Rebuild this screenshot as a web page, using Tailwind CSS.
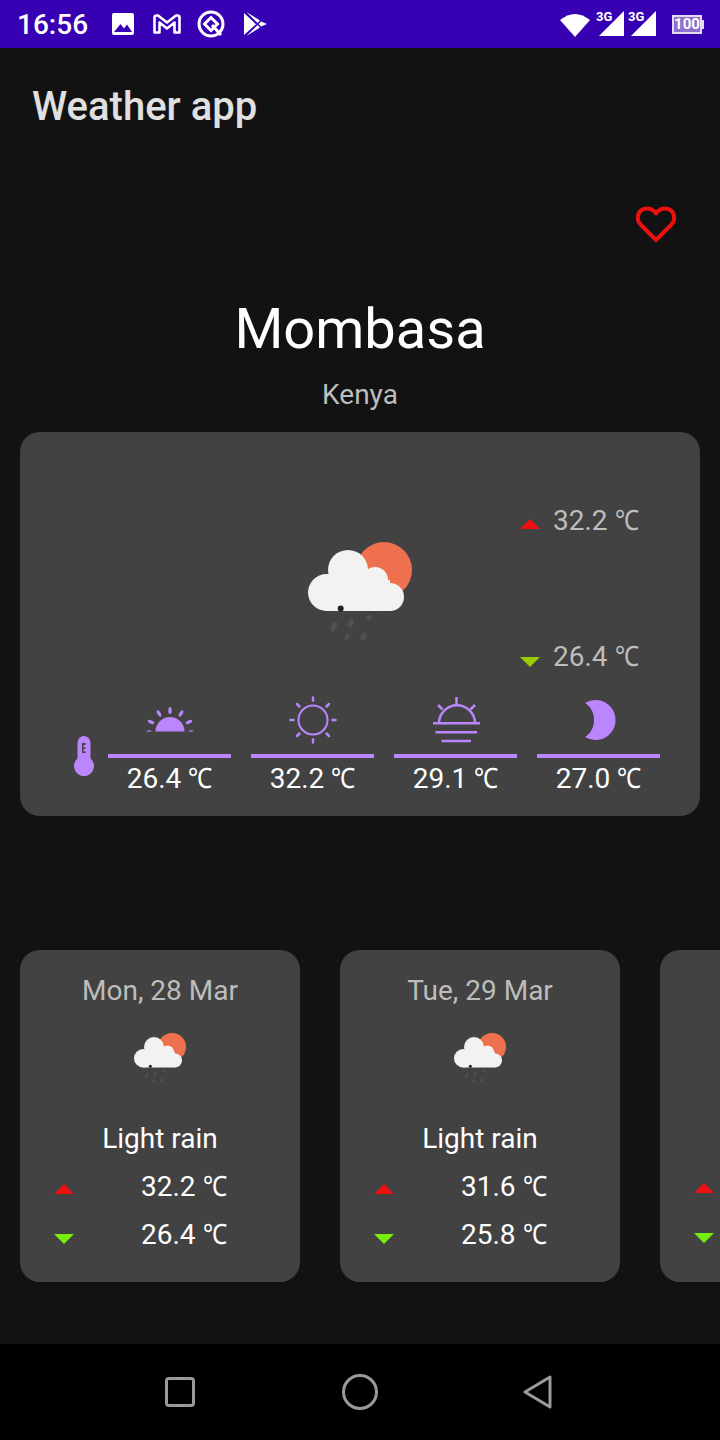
<!DOCTYPE html>
<html lang="en">
<head>
  <meta charset="UTF-8" />
  <meta name="viewport" content="width=device-width, initial-scale=1.0"/>
  <title>Weather app</title>
  <script src="https://cdn.jsdelivr.net/npm/@tailwindcss/browser@4"></script>
</head>
<body class="bg-[#121212] font-['Roboto','Noto_Sans',sans-serif]">
  <svg class="hidden" xmlns="http://www.w3.org/2000/svg">
    <symbol id="rainCloud" viewBox="0 0 104 104">
      <circle cx="76" cy="30" r="28" fill="#ef704e"/>
      <g fill="#f2f2f2">
        <circle cx="40" cy="30" r="20"/>
        <circle cx="18.500" cy="52.500" r="18.500"/>
        <circle cx="67" cy="40" r="13"/>
        <circle cx="82" cy="57" r="14"/>
        <rect x="18" y="40" width="64" height="31"/>
      </g>
      <circle cx="32.700" cy="68.500" r="3" fill="#222"/>
      <g stroke="#505050" stroke-width="5" stroke-linecap="round">
        <path d="M27 84l-2 5M43.500 81l-1.500 4M61 78l.5-.5M39 97l.5-.5M56 95l-1 3"/>
      </g>
    </symbol>
    <symbol id="triUp" viewBox="0 0 20 10"><path d="M10 0L20 10H0z"/></symbol>
    <symbol id="triDown" viewBox="0 0 20 10"><path d="M0 0H20L10 10z"/></symbol>
  </svg>

  <div class="w-[720px] h-[1440px] flex flex-col overflow-hidden">
    <!-- status bar -->
    <div class="h-12 shrink-0 bg-[#3700b3] flex items-center text-white relative">
      <span class="ml-[17px] mt-[2px] w-[69px] text-[28px] font-medium leading-none">16:56</span>
      <svg class="ml-[26px]" width="22" height="22" viewBox="0 0 22 22"><path fill="#fff" fill-rule="evenodd" d="M2 0H20a2 2 0 0 1 2 2V20a2 2 0 0 1-2 2H2a2 2 0 0 1-2-2V2a2 2 0 0 1 2-2zM2 19H20L15 11.500 12 15.500 8.500 11z"/></svg>
      <svg class="ml-[19px]" width="28" height="20" viewBox="0 0 28 20"><path fill="none" stroke="#fff" stroke-width="2.600" stroke-linejoin="round" d="M1.500 3.500Q1.500 1.500 3.500 1.500H5L14 8.500L23 1.500H24.500Q26.500 1.500 26.500 3.500V18.500H21.500V8.500L14 14.500L6.500 8.500V18.500H1.500Z"/></svg>
      <svg class="ml-[16px]" width="28" height="28" viewBox="0 0 28 28"><circle cx="14" cy="14" r="12" fill="none" stroke="#fff" stroke-width="3"/><path d="M14 7.500L20.500 14L14 20.500L7.500 14Z" fill="none" stroke="#fff" stroke-width="3"/><path d="M15 15L24 25" stroke="#fff" stroke-width="3"/></svg>
      <svg class="ml-[19px]" width="23" height="24" viewBox="0 0 23 24"><path fill="#fff" d="M0 1L12 12.300 0 23zM2.500 0L13.500 11 16 8.500zM2.500 24L13.500 13 16 15.500zM17 9.500L23 12 17 14.500 14.500 12z"/></svg>

      <svg class="ml-auto" width="30" height="26" viewBox="0 0 30 26"><path fill="#fff" d="M0 9Q15 -3 30 9L15 26Z"/></svg>
      <div class="relative ml-[6px] w-[28px] h-[26px]">
        <svg class="absolute left-[3px] top-0" width="25" height="25" viewBox="0 0 25 25"><path fill="#fff" d="M25 0V25H0Z"/></svg>
        <span class="absolute left-0 -top-[1px] text-[13px] font-bold leading-[14px]">3G</span>
      </div>
      <div class="relative ml-[4px] w-[28px] h-[26px]">
        <svg class="absolute left-[3px] top-0" width="25" height="25" viewBox="0 0 25 25"><path fill="#fff" d="M25 0V25H0Z"/></svg>
        <span class="absolute left-0 -top-[1px] text-[13px] font-bold leading-[14px]">3G</span>
      </div>
      <div class="ml-[16px] mr-[16px] flex items-center">
        <div class="w-[30px] h-[19px] border-2 border-[#e4dcf4] bg-[#8e70cf] flex items-center justify-center text-[15px] font-bold leading-none">100</div>
        <div class="w-[2px] h-[9px] bg-[#e4dcf4]"></div>
      </div>
    </div>

    <!-- app bar -->
    <div class="h-[117px] shrink-0 pl-[32px] pt-[33px]">
      <h1 class="text-[40px] font-medium leading-[52px] text-[#e0e0e0]">Weather app</h1>
    </div>

    <main class="flex-1 min-h-0">
      <div class="flex justify-end pr-[44px] pt-[41px] h-[132px]">
        <svg width="40" height="36" viewBox="0 0 40 36"><path fill="none" stroke="#ee0f0f" stroke-width="4" stroke-linejoin="round" d="M20 34L5 19C-1 13 2 2.500 11 2.500C15 2.500 18 4.500 20 7.500C22 4.500 25 2.500 29 2.500C38 2.500 41 13 35 19Z"/></svg>
      </div>
      <div class="text-center text-white text-[56px] leading-[64px]">Mombasa</div>
      <div class="text-center text-[#bdbdbd] text-[28px] leading-[36px] mt-[16px]">Kenya</div>

      <!-- today card -->
      <section class="mx-5 mt-[19px] h-[384px] rounded-[20px] bg-[#424242] pt-[68px]">
        <div class="grid grid-cols-[1fr_104px_1fr] h-[188px]">
          <div></div>
          <svg class="mt-[40px]" width="104" height="104"><use href="#rainCloud"/></svg>
          <div class="mt-[1px] h-[176px] flex flex-col justify-between pl-[108px] text-[28px] leading-[40px] text-[#bdbdbd] whitespace-nowrap">
            <div class="flex items-center gap-[13px]"><svg class="fill-[#ee1010] mt-[6px]" width="20" height="10"><use href="#triUp"/></svg><span>32.2 <span class="inline-block w-[24px] text-left origin-left scale-x-[.87]">℃</span></span></div>
            <div class="flex items-center gap-[13px]"><svg class="fill-[#99cc00] mt-[10px]" width="20" height="10"><use href="#triDown"/></svg><span>26.4 <span class="inline-block w-[24px] text-left origin-left scale-x-[.87]">℃</span></span></div>
          </div>
        </div>
        <div class="flex pl-[54px] mt-[8px] text-white text-[28px] leading-[40px] text-center">
          <svg class="mt-[40px]" width="20" height="40" viewBox="0 0 20 40"><path fill="#bb86fc" fill-rule="evenodd" d="M3.500 6.500a6.500 6.500 0 0 1 13 0V22.400a10 10 0 1 1-13 0zM8 7V17H11.500V15.500H9.500V13H11.500V11.500H9.500V9H11.500V7z"/></svg>
          <div class="ml-[14px] flex gap-5">
            <div class="w-[123px]">
              <svg class="mx-auto h-12" width="48" height="48" viewBox="0 0 48 48"><g fill="#bb86fc" transform="translate(0 2.500)"><path d="M9.500 33a14.500 14.500 0 0 1 29 0z"/><ellipse cx="24" cy="12" rx="1.700" ry="3.500"/><ellipse cx="13" cy="15" rx="1.700" ry="3.500" transform="rotate(-30 13 15)"/><ellipse cx="35" cy="15" rx="1.700" ry="3.500" transform="rotate(30 35 15)"/><ellipse cx="5" cy="23.500" rx="1.700" ry="3.500" transform="rotate(-65 5 23.500)"/><ellipse cx="43" cy="23.500" rx="1.700" ry="3.500" transform="rotate(65 43 23.500)"/><path d="M0 33q3-2.500 6 0zM42 33q3-2.500 6 0z"/></g></svg>
              <div class="h-1 bg-[#bb86fc] mt-[10px]"></div>
              <div class="mt-[1px] whitespace-nowrap">26.4 <span class="inline-block w-[24px] text-left origin-left scale-x-[.87]">℃</span></div>
            </div>
            <div class="w-[123px]">
              <svg class="mx-auto h-12" width="48" height="48" viewBox="0 0 48 48"><g fill="none" stroke="#bb86fc"><circle cx="24" cy="24" r="14.500" stroke-width="2"/><path stroke-width="2.500" stroke-linecap="round" d="M24 1.500v3M24 43.500v3M1.500 24h3M43.500 24h3M8 8l2.500 2.500M40 8l-2.500 2.500M8 40l2.500-2.500M40 40l-2.500-2.500"/></g></svg>
              <div class="h-1 bg-[#bb86fc] mt-[10px]"></div>
              <div class="mt-[1px] whitespace-nowrap">32.2 <span class="inline-block w-[24px] text-left origin-left scale-x-[.87]">℃</span></div>
            </div>
            <div class="w-[123px]">
              <svg class="mx-auto h-12" width="48" height="48" viewBox="0 0 48 48"><g fill="none" stroke="#bb86fc" stroke-width="2.500"><path d="M1 27.300H48M3.500 36.300H45M9.500 45H39M7 27.300a18 18 0 0 1 36 0"/><path d="M24.500 1v8.500M6 9l4.500 4.500M43 9l-4.500 4.500"/></g></svg>
              <div class="h-1 bg-[#bb86fc] mt-[10px]"></div>
              <div class="mt-[1px] whitespace-nowrap">29.1 <span class="inline-block w-[24px] text-left origin-left scale-x-[.87]">℃</span></div>
            </div>
            <div class="w-[123px]">
              <svg class="mx-auto h-12" width="48" height="48" viewBox="0 0 48 48"><path fill="#bb86fc" d="M10 7A20 20 0 1 1 10 41C22 34 22 14 10 7Z"/></svg>
              <div class="h-1 bg-[#bb86fc] mt-[10px]"></div>
              <div class="mt-[1px] whitespace-nowrap">27.0 <span class="inline-block w-[24px] text-left origin-left scale-x-[.87]">℃</span></div>
            </div>
          </div>
        </div>
      </section>

      <!-- forecast -->
      <div class="flex gap-10 pl-5 mt-[134px] w-[720px] overflow-hidden">
        <article class="w-[280px] h-[332px] shrink-0 rounded-[20px] bg-[#424242] pt-[21px] text-center text-[28px] leading-10">
          <div class="text-[#bdbdbd]">Mon, 28 Mar</div>
          <svg class="mx-auto mt-[21px]" width="52" height="52"><use href="#rainCloud"/></svg>
          <div class="text-white mt-[35px]">Light rain</div>
          <div class="flex items-center pl-[34px] mt-[8px] text-white whitespace-nowrap"><svg class="fill-[#ee1010] mt-[4px]" width="20" height="10"><use href="#triUp"/></svg><span class="ml-[67px]">32.2 <span class="inline-block w-[24px] text-left origin-left scale-x-[.87]">℃</span></span></div>
          <div class="flex items-center pl-[34px] mt-[8px] text-white whitespace-nowrap"><svg class="fill-[#76ee0c] mt-[8px]" width="20" height="10"><use href="#triDown"/></svg><span class="ml-[67px]">26.4 <span class="inline-block w-[24px] text-left origin-left scale-x-[.87]">℃</span></span></div>
        </article>
        <article class="w-[280px] h-[332px] shrink-0 rounded-[20px] bg-[#424242] pt-[21px] text-center text-[28px] leading-10">
          <div class="text-[#bdbdbd]">Tue, 29 Mar</div>
          <svg class="mx-auto mt-[21px]" width="52" height="52"><use href="#rainCloud"/></svg>
          <div class="text-white mt-[35px]">Light rain</div>
          <div class="flex items-center pl-[34px] mt-[8px] text-white whitespace-nowrap"><svg class="fill-[#ee1010] mt-[4px]" width="20" height="10"><use href="#triUp"/></svg><span class="ml-[67px]">31.6 <span class="inline-block w-[24px] text-left origin-left scale-x-[.87]">℃</span></span></div>
          <div class="flex items-center pl-[34px] mt-[8px] text-white whitespace-nowrap"><svg class="fill-[#76ee0c] mt-[8px]" width="20" height="10"><use href="#triDown"/></svg><span class="ml-[67px]">25.8 <span class="inline-block w-[24px] text-left origin-left scale-x-[.87]">℃</span></span></div>
        </article>
        <!-- third card runs off the screen, only its arrows show -->
        <article class="w-[280px] h-[332px] shrink-0 rounded-[20px] bg-[#424242] pt-[216px] text-[28px] leading-10">
          <div class="flex items-center pl-[34px] h-10"><svg class="fill-[#ee1010] mt-[4px]" width="20" height="10"><use href="#triUp"/></svg></div>
          <div class="flex items-center pl-[34px] mt-[8px] h-10"><svg class="fill-[#76ee0c] mt-[8px]" width="20" height="10"><use href="#triDown"/></svg></div>
        </article>
      </div>
    </main>

    <!-- nav bar -->
    <nav class="h-24 shrink-0 bg-black relative flex items-center">
      <div class="ml-[165px] w-[30px] h-[30px] border-[3px] border-[#9a9a9a] rounded-[4px]"></div>
      <svg class="ml-[147px]" width="36" height="36" viewBox="0 0 36 36"><circle cx="18" cy="18" r="16.500" fill="none" stroke="#9a9a9a" stroke-width="3"/></svg>
      <svg class="ml-[145px]" width="30" height="34" viewBox="0 0 30 34"><path fill="none" stroke="#9a9a9a" stroke-width="3" stroke-linejoin="round" d="M2 17L27 2V32Z"/></svg>
    </nav>
  </div>
</body>
</html>
